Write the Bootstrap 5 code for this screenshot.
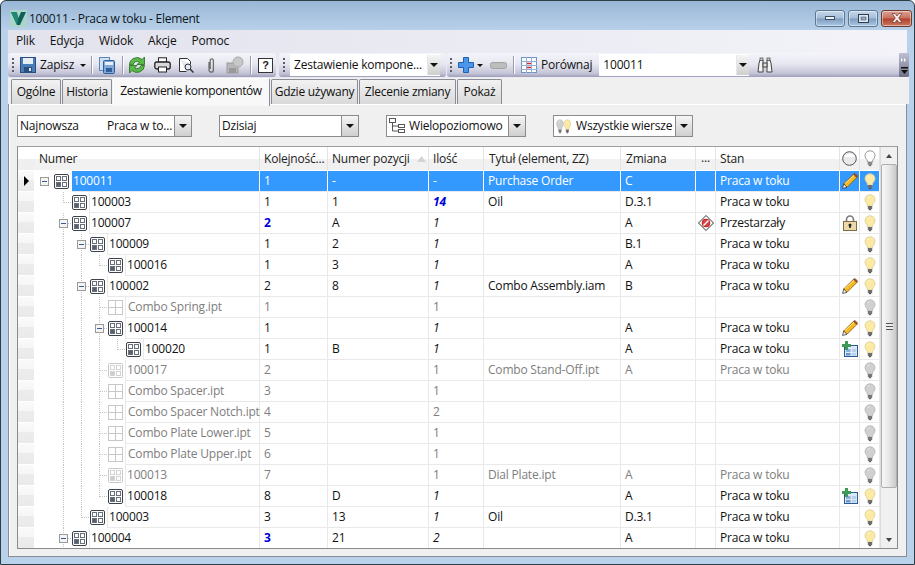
<!DOCTYPE html>
<html lang="pl">
<head>
<meta charset="utf-8">
<title>100011 - Praca w toku - Element</title>
<link href="https://cdn.jsdelivr.net/npm/bootstrap@5.3.0/dist/css/bootstrap.min.css" rel="stylesheet">
<style>
html,body{margin:0;height:100%;background:#fff;overflow:hidden}
body{font:12px/1.2 "Open Sans","Liberation Sans",sans-serif;color:#111;letter-spacing:-.2px}
.win{width:915px;height:565px;border:1px solid #2b3f44;border-radius:6px 6px 0 0;background:linear-gradient(#99b7d6 0,#b9d1ea 30px);padding:0 7px 7px;display:flex;flex-direction:column;overflow:hidden}
.ttl{height:29px;flex:none;padding-left:2px;padding-top:6px}
.ttl .tx{font-size:12px;margin-left:2px;color:#0c1620;letter-spacing:-.28px;padding-top:1px}
.capb{width:30px;height:17px;border:1px solid #5d7691;border-radius:3px;background:linear-gradient(#c5d8ea 0,#a4bdd8 48%,#7f9dbf 52%,#a9c6e2 100%);box-shadow:inset 0 0 0 1px rgba(255,255,255,.45);display:flex;align-items:center;justify-content:center}
.capb.cls{background:linear-gradient(#dda295 0,#c6705c 48%,#b1412b 52%,#c87a5e 100%);border-color:#6e3a30;width:31px}
.capgrp{gap:3px;margin-right:-5px;margin-top:-1px}
.mnu{height:23px;flex:none;background:linear-gradient(90deg,#e1e2ec,#f3f3f9);gap:15px;padding-left:8px}
.tbwrap{height:25px;flex:none;background:linear-gradient(90deg,#e1e2ec,#f3f3f9);margin-right:-2px;gap:3px}
.tbar{height:24px;display:flex;align-items:center;background:linear-gradient(#f4f4fa 0,#e7e7f1 45%,#c4c4d8 85%,#9e9eba 100%);border-radius:3px}
.tb1{width:268px;padding-left:4px}.tb2{width:167px;padding-left:4px;margin-right:-2px}.tb3{flex:1;padding-left:3px;border-radius:3px 0 0 3px}
.grip{width:2px;height:15px;flex:none;background:repeating-linear-gradient(#5a5f6c 0 2px,transparent 2px 4px)}
.tsep{width:1px;height:18px;flex:none;background:#9a9aae;box-shadow:1px 0 0 #fff}
.m2{margin-left:2px}.m3{margin-left:3px}.m4x{margin-left:4px}.m5{margin-left:5px}.m6{margin-left:6px}.m7{margin-left:7px}.m8{margin-left:8px}.m9{margin-left:9px}.m10{margin-left:10px}.m11{margin-left:11px}
.tcb{height:22px;background:#fff;display:flex;align-items:center;padding-left:4px;flex:none}
.tcb .lab{flex:1;white-space:nowrap}
.ddb{width:13px;height:20px;flex:none;background:linear-gradient(#f5f5f5,#cfcfcf);display:flex;align-items:center;justify-content:center;border-left:1px solid #e6e6e6}
.tri{width:0;height:0;border:4px solid transparent;border-top:4px solid #111;border-bottom:0;display:block}
.tri.s{border-width:3px 3px 0}
.ovf{width:10px;height:24px;margin-left:auto;background:linear-gradient(#c0c0d4,#6f6f86);display:flex;flex-direction:column;align-items:center;justify-content:space-between;padding:5px 0 3px;border-radius:0 0 2px 0}
.tabbar.nav-tabs{height:26px;flex:none;--bs-nav-tabs-border-width:0;border:0;padding-left:3px;gap:1px;align-items:flex-end;background:#f0f0f0;position:relative;z-index:2;margin-right:-2px}
.tabbar .nav-link{height:25px;padding:5px 0 0;border:1px solid #898c95;border-bottom:0;border-radius:2px 2px 0 0;background:linear-gradient(#f2f2f2,#d9d9d9);color:#111;font-size:12px;margin:0;text-align:center;white-space:nowrap;letter-spacing:-.25px}
.tabbar .nav-link.active{height:28px;padding-top:5px;padding-right:1px;color:#111;border-top-color:#fff;border-left-color:#fff;border-right:1px solid #898c95;margin-bottom:-2px;background:#f8f8f8;position:relative;z-index:3;letter-spacing:-.42px}
.panel{flex:1;min-height:0;border:1px solid #898c95;margin-top:-1px;background:#f0f0f0;padding:11px 6px 7px 8px;box-shadow:inset 1px 1px 0 #fff;display:flex;flex-direction:column}
.filt{height:22px;flex:none;margin-bottom:9px}
.cmb{height:22px;border:1px solid #8b8b8b;background:#fff;display:flex;align-items:center;padding-left:2px;flex:none}
.cmb .lab{flex:1;white-space:nowrap}
.cmb .ddb{height:20px;width:17px;border-left:1px solid #8b8b8b}
.c1{width:175px}.c2{width:140px;margin-left:27px}.c3{width:140px;margin-left:27px}.c4{width:140px;margin-left:27px}
.gridbox{flex:1;min-height:0;border:1px solid #8a8a8a;border-top-color:#9e9e9e;display:flex;background:#fff;overflow:hidden;width:881px;box-shadow:inset 1px 1px 0 #aaa}
.gridt.table{--bs-table-bg:#fff;--bs-table-color:#111;table-layout:fixed;width:862px;min-width:862px;margin:0;border-collapse:separate;border-spacing:0;flex:none}
.gridt th{height:24px;padding:1px 4px 0;font-weight:400;background:linear-gradient(#fff 0,#fff 50%,#f1f1f1 51%,#f1f1f1 100%);border-bottom:1px solid #fff;border-right:1px solid #e4e4e4;white-space:nowrap;box-shadow:none;vertical-align:middle;color:#222}
.gridt th.hp{padding-left:5px}
.gridt td{height:21px;padding:0 4px 1px;border:0;border-bottom:1px solid #e9e9e9;border-right:1px solid #e9e9e9;white-space:nowrap;vertical-align:middle;line-height:19px;box-shadow:none}
.gridt td.rh,.gridt th.rh{padding:0;background:linear-gradient(#fafafa 0,#f6f6f6 45%,#ececec 46%,#eaeaea 100%);border-bottom:1px solid #fff;border-right:0}
.gridt td.rh svg{display:block}
.gridt th.rh{background:linear-gradient(#fff 50%,#efefef 51%)}
.gridt td.tree{padding:0;border-bottom:0}
.trow{display:flex;height:21px;align-items:stretch}
.tu0{width:20px;height:21px;flex:none;display:block}
.tu{width:18px;height:21px;flex:none;display:block}
.aico{width:15px;height:15px;flex:none;align-self:center;margin-top:-1px;margin-right:2px}
.nm{flex:1;padding-left:1px;border-left:1px solid #e9e9e9;border-bottom:1px solid #e9e9e9;height:21px;line-height:19px;white-space:nowrap}
.nm.prt{padding-left:2px}
.sel td{--bs-table-bg:#39f;background:#39f;color:#fff;border-right-color:#fff}
.gridt .sel td.tree{background:#fff}
.sel .nm{background:#39f;color:#fff;border-left:0;margin-left:1px}
.gridt td.ic,.gridt th.ic{padding:0;text-align:center}
.ic svg{display:block;margin:0 auto}
.fad,.gridt td.fad{color:#7e7e7e}
.b{color:#0000d8;font-weight:700}
.bi{color:#0000d8;font-weight:700;font-style:italic}
.it{font-style:italic}
.sb{width:17px;flex:none;background:#f0f0f0;display:flex;flex-direction:column;align-items:center;border-left:1px solid #dcdcdc}
.sba{height:17px;flex:none;display:flex;align-items:center;justify-content:center}
.tri.up{border:3px solid transparent;border-bottom:4px solid #444;border-top:0}
.tri.dn{border:3px solid transparent;border-top:4px solid #444;border-bottom:0}
.thumb{width:16px;height:324px;flex:none;border:1px solid #b0b0b0;border-radius:2px;background:linear-gradient(90deg,#f7f7f7,#e7e7e7 50%,#c9c9c9);display:flex;align-items:center;justify-content:center}
.thumb i{width:7px;height:7px;background:repeating-linear-gradient(#555 0 1px,#eee 1px 3px)}
.hlp{width:15px;height:15px;border:1px solid #333;font:700 11px/13px "Liberation Sans",sans-serif;text-align:center;display:block;background:#fff;flex:none;color:#222}
.srt{margin-left:7px;vertical-align:1px}
</style>
</head>
<body>
<svg width="0" height="0" style="position:absolute">
<defs>
<symbol id="as" viewBox="0 0 15 15"><rect x=".5" y=".5" width="14" height="14" rx="1.500" fill="#fff" stroke="#3c424c"/><rect x="2.500" y="2.500" width="4" height="4" fill="#fff" stroke="#6a707a"/><rect x="8.500" y="2.500" width="4" height="4" fill="#fff" stroke="#6a707a"/><rect x="2.500" y="8.500" width="4" height="4" fill="#59606b" stroke="#6a707a"/><rect x="8.500" y="8.500" width="4" height="4" fill="#fff" stroke="#6a707a"/></symbol>
<symbol id="asf" viewBox="0 0 15 15"><rect x=".5" y=".5" width="14" height="14" rx="1" fill="#fff" stroke="#c8c8c8"/><rect x="2.500" y="2.500" width="4" height="4" fill="#fff" stroke="#d4d4d4"/><rect x="8.500" y="2.500" width="4" height="4" fill="#fff" stroke="#d4d4d4"/><rect x="2.500" y="8.500" width="4" height="4" fill="#ccc" stroke="#d4d4d4"/><rect x="8.500" y="8.500" width="4" height="4" fill="#fff" stroke="#d4d4d4"/></symbol>
<symbol id="pt" viewBox="0 0 15 15"><rect x=".5" y=".5" width="14" height="14" fill="#fff" stroke="#c8c8c8"/><path d="M7.500 1v13M1 7.500h13" stroke="#c8c8c8" fill="none"/></symbol>
<symbol id="tl" viewBox="0 0 18 21"><path d="M9.500 0v11M10 10.500h8" stroke="#c4c4c4" stroke-dasharray="1 1" fill="none"/></symbol>
<symbol id="tt" viewBox="0 0 18 21"><path d="M9.500 0v21M10 10.500h8" stroke="#c4c4c4" stroke-dasharray="1 1" fill="none"/></symbol>
<symbol id="tv" viewBox="0 0 18 21"><path d="M9.500 0v21" stroke="#c4c4c4" stroke-dasharray="1 1" fill="none"/></symbol>
<symbol id="tb" viewBox="0 0 18 21"><path d="M9.500 0v21M14 10.500h4" stroke="#c4c4c4" stroke-dasharray="1 1" fill="none"/><rect x="5.500" y="6.500" width="8" height="8" fill="#f4f4f4" stroke="#9a9a9a"/><path d="M7 10.500h5" stroke="#3a5a98" fill="none"/></symbol>
<symbol id="tb0" viewBox="0 0 20 21"><rect x="6.500" y="6.500" width="8" height="8" fill="#f4f4f4" stroke="#9a9a9a"/><path d="M8 10.500h5" stroke="#3a5a98" fill="none"/></symbol>
<symbol id="bulb" viewBox="0 0 12 17"><path d="M6 .8C3 .8 1 3 1 5.500c0 2.300 1.700 3.400 2.400 5.300v1.200h5.200v-1.200C9.300 8.900 11 7.800 11 5.500 11 3 9 .8 6 .8z" fill="#fce9a4" stroke="#d9cc98" stroke-width=".8"/><path d="M4 4c.5-1 1.300-1.400 2-1.500" stroke="#fff9dc" fill="none"/><rect x="3.800" y="12" width="4.400" height="3" fill="#6e6e6e"/><rect x="4.800" y="15" width="2.400" height="1.200" fill="#555"/></symbol>
<symbol id="bulbg" viewBox="0 0 12 17"><path d="M6 .8C3 .8 1 3 1 5.500c0 2.300 1.700 3.400 2.400 5.300v1.200h5.200v-1.200C9.300 8.900 11 7.800 11 5.500 11 3 9 .8 6 .8z" fill="#d0d0d0" stroke="#b4b4b4" stroke-width=".8"/><path d="M4 4c.5-1 1.300-1.400 2-1.500" stroke="#eee" fill="none"/><rect x="3.800" y="12" width="4.400" height="3" fill="#777"/><rect x="4.800" y="15" width="2.400" height="1.200" fill="#666"/></symbol>
<symbol id="bulbo" viewBox="0 0 12 17"><path d="M6 .8C3 .8 1 3 1 5.500c0 2.300 1.700 3.400 2.400 5.300v1.200h5.200v-1.200C9.300 8.900 11 7.800 11 5.500 11 3 9 .8 6 .8z" fill="#fff" stroke="#8a8a8a" stroke-width=".9"/><rect x="3.800" y="12" width="4.400" height="3" fill="#888"/><rect x="4.800" y="15" width="2.400" height="1.200" fill="#777"/></symbol>
<symbol id="pen" viewBox="0 0 16 16"><path d="M11.500 1.200l3.300 3.300-9.800 9.800-3.300-3.300z" fill="#f6b81f" stroke="#8a5c10" stroke-width=".8"/><path d="M3 10.500l9.500-8.500" stroke="#ffe58a" fill="none"/><path d="M11.500 1.200l1.500-.8 2.600 2.600-.8 1.500z" fill="#a4572c" stroke="#6e3a1a" stroke-width=".6"/><path d="M1.700 11l3.300 3.300-4.400 1.100z" fill="#fff" stroke="#333" stroke-width=".8"/></symbol>
<symbol id="lock" viewBox="0 0 14 16"><path d="M3.500 7V4.500a3.500 3.500 0 0 1 7 0V7" fill="none" stroke="#7a7a7a" stroke-width="1.600"/><rect x=".5" y="6.500" width="13" height="9" fill="#ecd9a8" stroke="#7d6c45"/><circle cx="7" cy="10" r="1.500" fill="#222"/><rect x="6.200" y="10" width="1.600" height="3" fill="#222"/></symbol>
<symbol id="proh" viewBox="0 0 16 16"><path d="M8 .5L15.500 8 8 15.500.5 8z" fill="#fff" stroke="#333"/><circle cx="8" cy="8" r="3.900" fill="#d44" stroke="#a11" stroke-width=".8"/><path d="M5.500 10.500l5-5" stroke="#fff" stroke-width="1.400"/></symbol>
<symbol id="addg" viewBox="0 0 16 16"><rect x="2.500" y="4.500" width="13" height="11" fill="#dbe8f5" stroke="#2a5a98"/><rect x="4" y="8" width="4.500" height="3" fill="#8fb0d8"/><rect x="10" y="8" width="4" height="3" fill="#b9cfe8"/><rect x="4" y="12" width="4.500" height="2.500" fill="#6f96c8"/><rect x="10" y="12" width="4" height="2.500" fill="#b9cfe8"/><path d="M3 0h3v3h3v3H6v3H3V6H0V3h3z" fill="#3f9a56"/></symbol>
</defs>
</svg>

<div class="win">
  <div class="ttl d-flex align-items-center">
    <svg width="17" height="17" viewBox="0 0 17 17"><rect width="17" height="17" fill="#a9d6c8"/><path d="M1 2h5.500L8.500 8 11 2h5L10 15H7z" fill="#125e58"/><path d="M1 2h5.500L8.500 8l-1.500 7z" fill="#1e8a76"/></svg>
    <span class="tx">100011 - Praca w toku - Element</span>
    <div class="ms-auto d-flex capgrp">
      <span class="capb"><svg width="10" height="5"><rect x=".5" y=".5" width="9" height="3" fill="#eef3f8" stroke="#3d4f63"/></svg></span>
      <span class="capb"><svg width="11" height="9"><rect x=".5" y=".5" width="10" height="8" fill="#dfe8f2" stroke="#2f3f52"/><rect x="3" y="3" width="5" height="3" fill="#95adc6" stroke="#2f3f52" stroke-width=".5"/></svg></span>
      <span class="capb cls"><svg width="14" height="10" viewBox="0 0 14 10"><path d="M2 .5h3l2 2.500L9 .5h3L8.700 5 12 9.500H9L7 7 5 9.500H2L5.300 5z" fill="#f4ebe8" stroke="#6e3a30" stroke-width=".7"/></svg></span>
    </div>
  </div>

  <nav class="mnu d-flex align-items-center"><span>Plik</span><span>Edycja</span><span>Widok</span><span>Akcje</span><span>Pomoc</span></nav>

  <div class="tbwrap d-flex">
    <div class="tbar tb1">
      <span class="grip"></span>
      <svg class="m6" width="16" height="16" viewBox="0 0 16 16"><rect x=".5" y=".5" width="15" height="15" fill="#4a7cb8" stroke="#2c4f82"/><rect x="3" y="1" width="10" height="6" fill="#e8eef6"/><rect x="4" y="10" width="8" height="5" fill="#2c4f82"/><rect x="9" y="11" width="2" height="3" fill="#dbe6f3"/></svg>
      <span class="m4x">Zapisz</span>
      <span class="tri s m6"></span>
      <span class="tsep m5"></span>
      <svg class="m6" width="18" height="18" viewBox="0 0 18 18"><rect x="1.500" y="1.500" width="10" height="13" fill="#cfe0f3" stroke="#5d86b8"/><rect x="5.500" y="4.500" width="11" height="13" rx="1" fill="#7fa8d8" stroke="#2f5f9a"/><rect x="7" y="6" width="8" height="3" fill="#e8f0f9"/><rect x="8" y="12" width="6" height="4" fill="#2f5f9a"/></svg>
      <span class="tsep m6"></span>
      <svg class="m5" width="18" height="18" viewBox="0 0 18 18"><path d="M1.500 9A7.500 7.500 0 0 1 14 3.500L16.500 1v7.500H9L11.500 6A4.300 4.300 0 0 0 5 9z" fill="#5cb84a" stroke="#256b1e" stroke-width=".8"/><path d="M16.500 9.500A7.500 7.500 0 0 1 4 14.500L1.500 17V9.500H9L6.500 12a4.300 4.300 0 0 0 6.500-2.500z" fill="#5cb84a" stroke="#256b1e" stroke-width=".8"/></svg>
      <svg class="m8" width="17" height="16" viewBox="0 0 17 16"><rect x="4.500" y=".8" width="8" height="4.500" fill="#fff" stroke="#222"/><rect x=".8" y="5" width="15.400" height="7" rx="2" fill="#d8d8d8" stroke="#222" stroke-width="1.300"/><rect x="4.500" y="10" width="8" height="5" fill="#fff" stroke="#222"/></svg>
      <svg class="m7" width="17" height="16" viewBox="0 0 17 16"><path d="M1.500 1.500h8l3 3v3M1.500 1.500v13h7" fill="#fff" stroke="#333"/><circle cx="10" cy="10" r="3" fill="#dfeaf6" stroke="#333"/><path d="M12 12l3.500 3.500" stroke="#333" stroke-width="1.500"/></svg>
      <svg class="m11" width="10" height="17" viewBox="0 0 10 17"><path d="M3 5v8a2.200 2.200 0 0 0 4.400 0V3.500a1.500 1.500 0 0 0-3.200 0V12" fill="none" stroke="#6e6e6e" stroke-width="1.300"/></svg>
      <svg class="m10" width="18" height="18" viewBox="0 0 18 18"><rect x="1" y="7" width="11" height="10" fill="#b8b8b8" stroke="#999"/><rect x="3" y="12" width="7" height="5" fill="#999"/><circle cx="12" cy="6" r="5" fill="#c8c8c8" stroke="#aaa"/></svg>
      <span class="tsep m6"></span>
      <span class="hlp m7">?</span>
    </div>
    <div class="tbar tb2">
      <span class="grip"></span>
      <div class="tcb m5" style="width:150px"><span class="lab">Zestawienie kompone...</span><span class="ddb"><span class="tri"></span></span></div>
    </div>
    <div class="tbar tb3">
      <span class="grip"></span>
      <svg class="m6" width="16" height="16" viewBox="0 0 16 16"><path d="M5.500 .5h5v5h5v5h-5v5h-5v-5h-5v-5h5z" fill="#4a96e8" stroke="#1d5fb0"/></svg>
      <span class="tri s m3"></span>
      <svg class="m7" width="17" height="7" viewBox="0 0 17 7"><rect x=".5" y=".5" width="16" height="6" rx="2" fill="#bdbdbd" stroke="#a2a2a2"/></svg>
      <span class="tsep m6"></span>
      <svg class="m7" width="16" height="16" viewBox="0 0 16 16"><rect x=".5" y=".5" width="15" height="15" fill="#fff" stroke="#6f93c4"/><path d="M0 4.500h16M5.500 0v16M10.500 0v16M0 8.500h16M0 12.500h16" stroke="#8fb0d8" fill="none"/><path d="M6 6.500h4M6 10.500h4" stroke="#d22" stroke-width="1.400" fill="none"/></svg>
      <span class="m4x">Porównaj</span>
      <div class="tcb m7" style="width:150px"><span class="lab">100011</span><span class="ddb"><span class="tri"></span></span></div>
      <svg class="m8" width="16" height="16" viewBox="0 0 16 16"><path d="M2 6l1-3h3v12H1zM14 6l-1-3h-3v12h5z" fill="#f2f2f2" stroke="#444"/><rect x="6" y="6" width="4" height="4" fill="#ddd" stroke="#444"/><rect x="3" y="1" width="3" height="2.500" fill="#ccc" stroke="#444" stroke-width=".7"/><rect x="10" y="1" width="3" height="2.500" fill="#ccc" stroke="#444" stroke-width=".7"/></svg>
      <span class="ovf"><svg width="6" height="4"><path d="M0 0l2 2-2 2zM3 0l2 2-2 2z" fill="#fff"/></svg><svg width="7" height="7"><path d="M0 0h7v1.500H0zM0 3h7L3.500 7z" fill="#111"/></svg></span>
    </div>
  </div>

  <ul class="nav nav-tabs tabbar">
    <li class="nav-item"><a class="nav-link" style="width:50px">Ogólne</a></li>
    <li class="nav-item"><a class="nav-link" style="width:50px">Historia</a></li>
    <li class="nav-item"><a class="nav-link active" style="width:157px">Zestawienie komponentów</a></li>
    <li class="nav-item"><a class="nav-link" style="width:87px">Gdzie używany</a></li>
    <li class="nav-item"><a class="nav-link" style="width:97px">Zlecenie zmiany</a></li>
    <li class="nav-item"><a class="nav-link" style="width:45px">Pokaż</a></li>
  </ul>

  <div class="panel">
    <div class="filt d-flex">
      <div class="cmb c1"><span class="lab d-flex"><span style="width:87px">Najnowsza</span><span>Praca w to...</span></span><span class="ddb"><span class="tri"></span></span></div>
      <div class="cmb c2"><span class="lab">Dzisiaj</span><span class="ddb"><span class="tri"></span></span></div>
      <div class="cmb c3"><svg width="16" height="16" viewBox="0 0 16 16" class="me-1"><rect x=".5" y=".5" width="6" height="4" fill="#fff" stroke="#555"/><rect x="9.500" y="6.500" width="6" height="3" fill="#fff" stroke="#555"/><rect x="9.500" y="11.500" width="6" height="3" fill="#fff" stroke="#555"/><path d="M3.500 5v8h6M3.500 8h6" fill="none" stroke="#555"/></svg><span class="lab">Wielopoziomowo</span><span class="ddb"><span class="tri"></span></span></div>
      <div class="cmb c4"><svg width="16" height="15" viewBox="0 0 24 17" class="me-1" preserveAspectRatio="none"><use href="#bulbg" x="0" y="0" width="12" height="17"/><use href="#bulb" x="11" y="0" width="12" height="17"/></svg><span class="lab">Wszystkie wiersze</span><span class="ddb"><span class="tri"></span></span></div>
    </div>

    <div class="gridbox">
      <table class="table gridt">
        <colgroup><col style="width:16px"><col style="width:226px"><col style="width:68px"><col style="width:101px"><col style="width:55px"><col style="width:137px"><col style="width:75px"><col style="width:20px"><col style="width:124px"><col style="width:20px"><col style="width:20px"></colgroup>
        <thead><tr>
          <th class="rh"></th><th class="hp">Numer</th><th>Kolejność...</th><th>Numer pozycji<svg class="srt" width="9" height="6" viewBox="0 0 9 6"><path d="M4.500 0L9 6H0z" fill="#d4d4d4"/></svg></th><th>Ilość</th><th class="hp">Tytuł (element, ZZ)</th><th class="hp">Zmiana</th><th class="ic">...</th><th>Stan</th>
          <th class="ic"><svg width="15" height="15" viewBox="0 0 15 15"><circle cx="7.500" cy="7.500" r="6.800" fill="#e9e9ee" stroke="#555"/><path d="M2 6a6 5 0 0 1 11 0z" fill="#fff"/></svg></th>
          <th class="ic"><svg width="12" height="17"><use href="#bulbo"/></svg></th>
        </tr></thead>
        <tbody>
<tr class="sel"><td class="rh"><svg width="16" height="20" viewBox="0 0 16 20"><path d="M6 5l5 5-5 5z" fill="#000"/></svg></td><td class="tree"><div class="trow"><svg class="tu0"><use href="#tb0"/></svg><svg class="aico"><use href="#as"/></svg><span class="nm">100011</span></div></td><td>1</td><td>-</td><td>-</td><td>Purchase Order</td><td>C</td><td></td><td>Praca w toku</td><td class="ic"><svg width="16" height="16"><use href="#pen"/></svg></td><td class="ic"><svg width="12" height="17"><use href="#bulb"/></svg></td></tr>
<tr><td class="rh"></td><td class="tree"><div class="trow"><span class="tu0"></span><svg class="tu"><use href="#tl"/></svg><svg class="aico"><use href="#as"/></svg><span class="nm">100003</span></div></td><td>1</td><td>1</td><td><span class="bi">14</span></td><td>Oil</td><td>D.3.1</td><td></td><td>Praca w toku</td><td class="ic"></td><td class="ic"><svg width="12" height="17"><use href="#bulb"/></svg></td></tr>
<tr><td class="rh"></td><td class="tree"><div class="trow"><span class="tu0"></span><svg class="tu"><use href="#tb"/></svg><svg class="aico"><use href="#as"/></svg><span class="nm">100007</span></div></td><td><span class="b">2</span></td><td>A</td><td class="it">1</td><td></td><td>A</td><td class="ic"><svg width="16" height="16"><use href="#proh"/></svg></td><td>Przestarzały</td><td class="ic"><svg width="14" height="16"><use href="#lock"/></svg></td><td class="ic"><svg width="12" height="17"><use href="#bulb"/></svg></td></tr>
<tr><td class="rh"></td><td class="tree"><div class="trow"><span class="tu0"></span><svg class="tu"><use href="#tv"/></svg><svg class="tu"><use href="#tb"/></svg><svg class="aico"><use href="#as"/></svg><span class="nm">100009</span></div></td><td>1</td><td>2</td><td class="it">1</td><td></td><td>B.1</td><td></td><td>Praca w toku</td><td class="ic"></td><td class="ic"><svg width="12" height="17"><use href="#bulb"/></svg></td></tr>
<tr><td class="rh"></td><td class="tree"><div class="trow"><span class="tu0"></span><svg class="tu"><use href="#tv"/></svg><svg class="tu"><use href="#tv"/></svg><svg class="tu"><use href="#tl"/></svg><svg class="aico"><use href="#as"/></svg><span class="nm">100016</span></div></td><td>1</td><td>3</td><td class="it">1</td><td></td><td>A</td><td></td><td>Praca w toku</td><td class="ic"></td><td class="ic"><svg width="12" height="17"><use href="#bulb"/></svg></td></tr>
<tr><td class="rh"></td><td class="tree"><div class="trow"><span class="tu0"></span><svg class="tu"><use href="#tv"/></svg><svg class="tu"><use href="#tb"/></svg><svg class="aico"><use href="#as"/></svg><span class="nm">100002</span></div></td><td>2</td><td>8</td><td class="it">1</td><td>Combo Assembly.iam</td><td>B</td><td></td><td>Praca w toku</td><td class="ic"><svg width="16" height="16"><use href="#pen"/></svg></td><td class="ic"><svg width="12" height="17"><use href="#bulb"/></svg></td></tr>
<tr><td class="rh"></td><td class="tree fad"><div class="trow"><span class="tu0"></span><svg class="tu"><use href="#tv"/></svg><svg class="tu"><use href="#tv"/></svg><svg class="tu"><use href="#tt"/></svg><svg class="aico"><use href="#pt"/></svg><span class="nm prt">Combo Spring.ipt</span></div></td><td class="fad">1</td><td></td><td class="fad">1</td><td></td><td></td><td></td><td></td><td class="ic"></td><td class="ic"><svg width="12" height="17"><use href="#bulbg"/></svg></td></tr>
<tr><td class="rh"></td><td class="tree"><div class="trow"><span class="tu0"></span><svg class="tu"><use href="#tv"/></svg><svg class="tu"><use href="#tv"/></svg><svg class="tu"><use href="#tb"/></svg><svg class="aico"><use href="#as"/></svg><span class="nm">100014</span></div></td><td>1</td><td></td><td class="it">1</td><td></td><td>A</td><td></td><td>Praca w toku</td><td class="ic"><svg width="16" height="16"><use href="#pen"/></svg></td><td class="ic"><svg width="12" height="17"><use href="#bulb"/></svg></td></tr>
<tr><td class="rh"></td><td class="tree"><div class="trow"><span class="tu0"></span><svg class="tu"><use href="#tv"/></svg><svg class="tu"><use href="#tv"/></svg><svg class="tu"><use href="#tv"/></svg><svg class="tu"><use href="#tl"/></svg><svg class="aico"><use href="#as"/></svg><span class="nm">100020</span></div></td><td>1</td><td>B</td><td class="it">1</td><td></td><td>A</td><td></td><td>Praca w toku</td><td class="ic"><svg width="16" height="16"><use href="#addg"/></svg></td><td class="ic"><svg width="12" height="17"><use href="#bulb"/></svg></td></tr>
<tr><td class="rh"></td><td class="tree fad"><div class="trow"><span class="tu0"></span><svg class="tu"><use href="#tv"/></svg><svg class="tu"><use href="#tv"/></svg><svg class="tu"><use href="#tt"/></svg><svg class="aico"><use href="#asf"/></svg><span class="nm">100017</span></div></td><td class="fad">2</td><td></td><td class="fad">1</td><td class="fad">Combo Stand-Off.ipt</td><td class="fad">A</td><td></td><td class="fad">Praca w toku</td><td class="ic"></td><td class="ic"><svg width="12" height="17"><use href="#bulbg"/></svg></td></tr>
<tr><td class="rh"></td><td class="tree fad"><div class="trow"><span class="tu0"></span><svg class="tu"><use href="#tv"/></svg><svg class="tu"><use href="#tv"/></svg><svg class="tu"><use href="#tt"/></svg><svg class="aico"><use href="#pt"/></svg><span class="nm prt">Combo Spacer.ipt</span></div></td><td class="fad">3</td><td></td><td class="fad">1</td><td></td><td></td><td></td><td></td><td class="ic"></td><td class="ic"><svg width="12" height="17"><use href="#bulbg"/></svg></td></tr>
<tr><td class="rh"></td><td class="tree fad"><div class="trow"><span class="tu0"></span><svg class="tu"><use href="#tv"/></svg><svg class="tu"><use href="#tv"/></svg><svg class="tu"><use href="#tt"/></svg><svg class="aico"><use href="#pt"/></svg><span class="nm prt">Combo Spacer Notch.ipt</span></div></td><td class="fad">4</td><td></td><td class="fad">2</td><td></td><td></td><td></td><td></td><td class="ic"></td><td class="ic"><svg width="12" height="17"><use href="#bulbg"/></svg></td></tr>
<tr><td class="rh"></td><td class="tree fad"><div class="trow"><span class="tu0"></span><svg class="tu"><use href="#tv"/></svg><svg class="tu"><use href="#tv"/></svg><svg class="tu"><use href="#tt"/></svg><svg class="aico"><use href="#pt"/></svg><span class="nm prt">Combo Plate Lower.ipt</span></div></td><td class="fad">5</td><td></td><td class="fad">1</td><td></td><td></td><td></td><td></td><td class="ic"></td><td class="ic"><svg width="12" height="17"><use href="#bulbg"/></svg></td></tr>
<tr><td class="rh"></td><td class="tree fad"><div class="trow"><span class="tu0"></span><svg class="tu"><use href="#tv"/></svg><svg class="tu"><use href="#tv"/></svg><svg class="tu"><use href="#tt"/></svg><svg class="aico"><use href="#pt"/></svg><span class="nm prt">Combo Plate Upper.ipt</span></div></td><td class="fad">6</td><td></td><td class="fad">1</td><td></td><td></td><td></td><td></td><td class="ic"></td><td class="ic"><svg width="12" height="17"><use href="#bulbg"/></svg></td></tr>
<tr><td class="rh"></td><td class="tree fad"><div class="trow"><span class="tu0"></span><svg class="tu"><use href="#tv"/></svg><svg class="tu"><use href="#tv"/></svg><svg class="tu"><use href="#tt"/></svg><svg class="aico"><use href="#asf"/></svg><span class="nm">100013</span></div></td><td class="fad">7</td><td></td><td class="fad">1</td><td class="fad">Dial Plate.ipt</td><td class="fad">A</td><td></td><td class="fad">Praca w toku</td><td class="ic"></td><td class="ic"><svg width="12" height="17"><use href="#bulbg"/></svg></td></tr>
<tr><td class="rh"></td><td class="tree"><div class="trow"><span class="tu0"></span><svg class="tu"><use href="#tv"/></svg><svg class="tu"><use href="#tv"/></svg><svg class="tu"><use href="#tl"/></svg><svg class="aico"><use href="#as"/></svg><span class="nm">100018</span></div></td><td>8</td><td>D</td><td class="it">1</td><td></td><td>A</td><td></td><td>Praca w toku</td><td class="ic"><svg width="16" height="16"><use href="#addg"/></svg></td><td class="ic"><svg width="12" height="17"><use href="#bulb"/></svg></td></tr>
<tr><td class="rh"></td><td class="tree"><div class="trow"><span class="tu0"></span><svg class="tu"><use href="#tv"/></svg><svg class="tu"><use href="#tl"/></svg><svg class="aico"><use href="#as"/></svg><span class="nm">100003</span></div></td><td>3</td><td>13</td><td class="it">1</td><td>Oil</td><td>D.3.1</td><td></td><td>Praca w toku</td><td class="ic"></td><td class="ic"><svg width="12" height="17"><use href="#bulb"/></svg></td></tr>
<tr><td class="rh"></td><td class="tree"><div class="trow"><span class="tu0"></span><svg class="tu"><use href="#tb"/></svg><svg class="aico"><use href="#as"/></svg><span class="nm">100004</span></div></td><td><span class="b">3</span></td><td>21</td><td class="it">2</td><td></td><td>A</td><td></td><td>Praca w toku</td><td class="ic"></td><td class="ic"><svg width="12" height="17"><use href="#bulb"/></svg></td></tr>
        </tbody>
      </table>
      <div class="sb">
        <span class="sba"><span class="tri up"></span></span>
        <span class="thumb"><i></i></span>
        <span class="flex-grow-1"></span>
        <span class="sba"><span class="tri dn"></span></span>
      </div>
    </div>
  </div>
</div>
</body>
</html>
